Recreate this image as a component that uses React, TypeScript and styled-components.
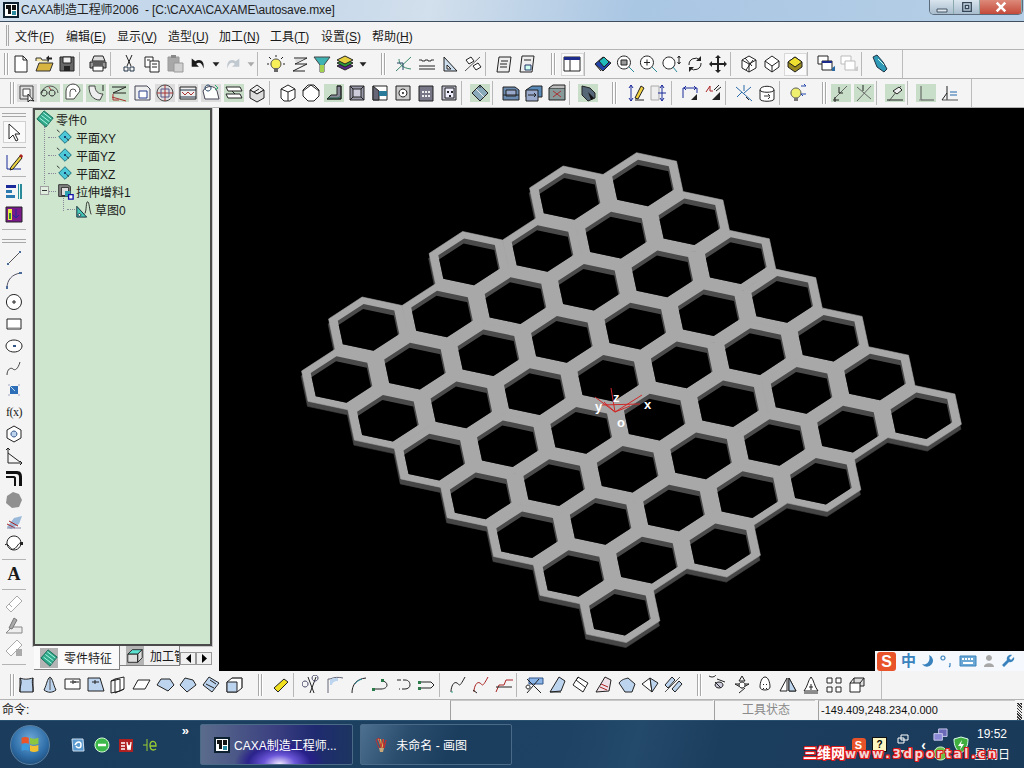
import React from 'react';
import styled, { createGlobalStyle } from 'styled-components';

const Global = createGlobalStyle`
  html, body { margin: 0; padding: 0; width: 1024px; height: 768px; overflow: hidden; background: #f4f4f4; }
  body { font-family: "Liberation Sans", "Noto Sans CJK SC", sans-serif; font-size: 12px; color: #1a1a1a; }
`;

type Shape = [string, string?, string?];
const K = '#222';
const GB: Shape = ['M0 1h20v18H0z', '#c9dec9'];
const GY: Shape = ['M0 1h20v18H0z', '#dcdcdc'];
const SK = '#bcd4ee';
const ICONS: Record<string, Shape[]> = {
  new: [['M4 2h8l4 4v12H4z', '#fff', K], ['M12 2v4h4', 'none', K]],
  open: [['M2 7V4h5l1 2h6v2', '#f2e6a0', '#333'], ['M2 17l3-8h14l-3 8z', '#d8b440', '#333'], ['M12 4l3-2.500v2h3v2h-3v2z', '#222']],
  save: [['M3 3h14v14H3z', '#666', K], ['M6 3h8v6H6z', '#eee', K], ['M7 12h6v5H7z', '#222']],
  print: [['M6 2h9l2 5H4z', '#ddd', K], ['M2 8h16v6H2z', '#999', K], ['M5 12h10v5H5z', '#fff', K], ['M5 10h10', 'none', '#222']],
  cut: [['M7 1l5 11M13 1L8 12', 'none', K], ['M5 13h4v4H5zM11 13h4v4h-4z', 'none', '#234']],
  copy: [['M3 3h8v10H3z', '#fff', K], ['M8 7h9v11H8z', '#fff', K], ['M10 10h5M10 13h5M5 6h3', 'none', K]],
  paste: [['M3 3h11v14H3z', '#a8a8a8', '#999'], ['M6 1h5v3H6z', '#888'], ['M9 9h9v9H9z', '#d0d0d0', '#999']],
  undo: [['M3 4v9h8l-3-3c3-3 7-1 8 5 2-8-4-12-9-8z', '#1a1a1a']],
  redo: [['M17 4v9H9l3-3c-3-3-7-1-8 5-2-8 4-12 9-8z', '#c0c8d0']],
  dd: [['M3 8h8l-4 5z', '#222']],
  ddg: [['M3 8h8l-4 5z', '#aaa']],
  sun: [['M10 5a5 5 0 1 1-.1 0z', '#f6ef5a', '#444'], ['M8 14h4v4H8z', '#666'], ['M10 1v2M3 3l2 2M17 3l-2 2M1 10h2M17 10h2', 'none', '#222']],
  zed: [['M5 4h13L6 10h12L4 17h12', 'none', K], ['M6 5l9 0-8 4z', '#ddd']],
  funnel: [['M2 3h16l-6 8v7H8v-7z', '#3fb3b3', '#444'], ['M8 11h4v7H8z', '#a4d050']],
  layers: [['M2 12l8-4 8 4-8 4z', '#5a2a8a', K], ['M2 9l8-4 8 4-8 4z', '#2f9a3a', K], ['M2 6l8-4 8 4-8 4z', '#e6d040', K]],
  note: [['M5 3h12l-2 15H3z', '#eee', K], ['M7 7h7M6 10h7M6 13h7', 'none', K]],
  note2: [['M5 2h12l-2 16H3z', '#eee', K], ['M7 6h7', 'none', K], ['M8 11h6v5H8z', '#cfe', '#236']],
  sk1: [['M2 17L17 3M5 5c0 5 3 9 12 10', 'none', '#3a8a6a'], ['M3 9h6v7', 'none', '#246']],
  sk2: [['M2 6h3v1h3V6h3v1h3V6h3', 'none', '#333'], ['M2 12h16M2 15h16', 'none', K]],
  sk3: [['M4 3v14h13z', '#cde', K], ['M7 11v4h4z', '#fff', K]],
  sk4: [['M2 17L17 3', 'none', '#555'], ['M3 6l5-3 3 4-5 3zM10 12l5-3 3 4-5 3z', '#fff', K]],
  win: [['M2 3h16v14H2z', '#fff', K], ['M2 3h16v3H2z', '#1d2c8a'], ['M8 6v11', 'none', K]],
  view1: [['M2 10l8-7 8 6-8 8z', '#24a', K], ['M6 7l5-4 5 5-5 5z', '#2bb', K], ['M2 10l6 7', 'none', K]],
  zoomw: [['M8 2a6.500 6.500 0 1 1-.1 0z', '#fff', K], ['M5 6h6v5H5z', '#999', K], ['M13 13l5 5', 'none', '#2a8a9a']],
  zoomi: [['M8 2a6.500 6.500 0 1 1-.1 0z', '#fff', K], ['M5 8.500h6M8 5.500v6', 'none', K], ['M13 13l5 5', 'none', '#2a8a9a']],
  zoomd: [['M7 3a6 6 0 1 1-.1 0z', '#fff', K], ['M17 2v8M15.500 4L17 2l1.500 2M15.500 8l1.500 2 1.500-2', 'none', K], ['M11 13l4 5', 'none', '#2a8a9a']],
  rotate: [['M4 11a6.500 6.500 0 0 1 11-5', 'none', K], ['M16 9a6.500 6.500 0 0 1-11 5', 'none', K], ['M16 2v5h-5zM4 18v-5h5z', K]],
  pan: [['M10 1l3 3h-2v5h5V7l3 3-3 3v-2h-5v5h2l-3 3-3-3h2v-5H4v2l-3-3 3-3v2h5V4H7z', K]],
  wire: [['M10 2l7 4v8l-7 4-7-4V6z', '#fff', K], ['M3 6l7 4 7-4M10 10v8M6 4l7 8M7 16l7-10', 'none', K]],
  wire2: [['M10 2l7 5v6l-7 5-7-5V7z', '#fff', K], ['M3 7l7 5 7-5M10 12v6', 'none', K]],
  shade: [['M10 3l7 5v5l-7 5-7-5V8z', '#9a8a20', K], ['M3 8l7-5 7 5-7 5z', '#f0e030', K]],
  win2: [['M2 2h10v8H2z', '#fff', K], ['M6 7h10v9H6z', '#fff', K], ['M6 7h10v2H6z', '#1d2c8a'], ['M16 14l3-2v5h-3z', '#2a6aa0']],
  win3: [['M2 2h10v8H2z', '#fff', '#bbb'], ['M6 7h10v9H6z', '#fff', '#bbb'], ['M16 14l3-2v5h-3z', '#ccc']],
  probe: [['M3 3l4-2 6 7 4 7-3 3-7-5z', '#2e9ab8', '#234'], ['M8 5l6 6', 'none', '#cfe']],
  a1: [GY, ['M3 3h13v13H3z', '#ddd', '#444'], ['M6 6h7v7H6z', '#fff', '#444'], ['M11 11l6 7-4-1-2 2z', '#fff', K]],
  a2: [GB, ['M2 10a8 7 0 0 1 16 0', 'none', '#555'], ['M4 13a3 3 0 1 1 .1 0zM12 13a3 3 0 1 1 .1 0z', 'none', K], ['M9 4l2 3', 'none', '#a33']],
  a3: [GB, ['M3 16V8a7 7 0 0 1 14 0l-6 8z', '#fff', '#444'], ['M7 14V9a3 3 0 0 1 6 0', 'none', '#555']],
  a4: [GB, ['M3 3c0 9 4 14 11 14l3-6c-5 0-8-3-8-8z', '#eee', '#444'], ['M17 2v6', 'none', K]],
  a5: [GB, ['M3 4h14L4 10h13', 'none', K], ['M3 14l14 4', 'none', '#a33'], ['M4 11v6h6', 'none', '#a33']],
  a6: [['M3 3h12l3 3v11H3z', '#eee', '#445'], ['M7 8h8v7H7z', '#fff', '#223a88']],
  a7: [GY, ['M10 2a8 8 0 1 1-.1 0z', '#ddd', '#444'], ['M10 2v16M2 10h16', 'none', '#a33'], ['M6 6h8v8H6z', 'none', '#558']],
  a8: [GY, ['M2 4h16v12H2z', '#eee', K], ['M4 9l3 3 3-3 3 3 3-3', 'none', '#a33'], ['M2 7h16M2 14h16', 'none', '#234']],
  a9: [GY, ['M2 8c3-6 12-6 14 0l2 8H4z', '#fff', '#445'], ['M7 8a3 3 0 1 1 .1 0z', 'none', '#246'], ['M14 2l3 3-3 2', 'none', '#2a6']],
  a10: [GB, ['M2 4h14l2 4H4zM2 11h14l2 4H4z', '#fff', K], ['M8 8l3 3', 'none', K]],
  a11: [['M3 7l7-5 7 5-7 4z', '#eee', K], ['M3 7v8l7 4 7-4V7l-7 4z', '#ddd', K], ['M7 9l5-3', 'none', K]],
  b1: [['M10 2l7 4v9l-5 3H6l-3-3V6z', '#fff', K], ['M3 6l7 3 7-3M10 9v9', 'none', K]],
  b2: [['M7 2h6l5 5v6l-5 5H7l-5-5V7z', '#fff', K], ['M2 8l8-6M10 2l8 6', 'none', K]],
  b3: [GB, ['M3 16l4-4h6V3h4v13z', '#889', K], ['M13 3l4 0v13H3', 'none', K], ['M4 15h10l3-2', 'none', '#264']],
  b4: [['M3 3h14v14H3z', '#99a', K], ['M6 6h8v8H6z', '#ccd', K], ['M3 3l3 3M17 3l-3 3M3 17l3-3M17 17l-3-3', 'none', K]],
  b5: [['M3 3h14v14H3z', '#fff', K], ['M3 3l6 5v9H3z', '#667', K], ['M9 8h8v5H9z', '#2a7a9a']],
  b6: [['M3 3h14v14H3z', '#ccc', K], ['M10 6a4 4 0 1 1-.1 0z', '#fff', K], ['M10 9a1 1 0 1 1-.1 0z', K]],
  b7: [['M3 3h14v15H3z', '#778', K], ['M6 8h2v2H6zM9 8h2v2H9zM12 8h2v2h-2zM6 12h2v2H6zM9 12h2v2H9zM12 12h2v2h-2z', '#eee']],
  b8: [['M3 3h14v14H3z', '#bbc', K], ['M6 5h9v10H6z', '#eef', K], ['M8 8h2v2H8zM12 8h2v2h-2zM10 12h2v2h-2z', K]],
  c1: [GB, ['M10 2l8 8-8 8-8-8z', '#8ab', K], ['M6 6l8 8', 'none', '#eee'], ['M10 2v3', 'none', K]],
  d1: [['M2 4h12l4 3v10H2z', '#6a8ab0', K], ['M5 7h10v6H5z', '#9ac', K], ['M2 12h16', 'none', K]],
  d2: [['M2 7l6-4h10v11H2z', '#5a8ab8', K], ['M2 7h12v11H2z', '#9ac', K], ['M4 12h8l-2-2M12 12l-2 2', 'none', K]],
  d3: [['M2 5h16v12H2z', '#899', K], ['M2 5l4-3h12v3', '#bbb', K], ['M6 8l8 6M14 8l-8 6', 'none', '#a33']],
  d4: [GB, ['M4 3l8 2 5 5v5l-7 3-6-6z', '#567', K], ['M10 9l6 6-3 2z', '#111']],
  e1: [['M5 2v16M3 15l2 3 2-3M3 5l2-3 2 3', 'none', '#1a2a9a'], ['M9 15l6-12 3 2-6 11z', '#f0d040', K], ['M9 17h9', 'none', K]],
  e2: [['M2 3h8v14H2z', '#eee', '#aaa'], ['M13 2v16M11 5l2-3 2 3M11 15l2 3 2-3M9 10h8', 'none', '#1a2a9a']],
  e3: [['M3 5h14M3 5v10M17 5v5', 'none', '#1a2a9a'], ['M11 17l6-6v6z', K], ['M6 3l-2 2 2 2M14 3l2 2-2 2', 'none', '#1a2a9a']],
  e4: [['M3 9l4-6v5h3', 'none', '#a22'], ['M9 17l8-8v8z', K], ['M11 7l5-5M13 8l5-4', 'none', K]],
  f1: [['M2 4l16 14M10 2v6M17 4l-7 6M3 14l5-5', 'none', '#2a6aaa'], ['M12 14l3 3', 'none', K]],
  f2: [['M3 7c0-5 14-5 14 0v9c0 3-14 3-14 0z', '#fff', K], ['M3 7c0 3 14 3 14 0', 'none', K], ['M7 13h6l-2-2M13 14l-2 2', 'none', '#333']],
  g1: [['M8 5a5 5 0 1 1-.1 0z', '#f0f070', '#555'], ['M6 15h4v3H6z', '#777'], ['M13 3h5M18 3l-2-2M13 11h5M13 11l2 2', 'none', '#24a']],
  h1: [GB, ['M3 16L16 3', 'none', '#666'], ['M8 4v6h4', 'none', K], ['M2 17h6M4 14v5', 'none', K]],
  h2: [GB, ['M3 18L17 3M3 4l14 12', 'none', '#666'], ['M9 2v6', 'none', K]],
  h3: [GB, ['M2 17h16', 'none', K], ['M4 18L16 3', 'none', '#555'], ['M8 8l6-4 3 3-5 4z', '#eee', K]],
  h4: [GB, ['M5 3v14h13', 'none', '#555'], ['M3 17h4', 'none', '#888']],
  h5: [['M8 3v14', 'none', K], ['M3 17h16', 'none', '#555'], ['M11 9h7M11 12h7', 'none', '#26a'], ['M8 10L3 17', 'none', K]],
  s1: [['M3 3c5 2 9 1 13 0v14H3z', SK, K], ['M3 3c3 5-1 9 0 14M16 3c-2 5 1 9 0 14', 'none', K]],
  s2: [['M10 2c3 2 3 7 6 13-4 3-8 3-12 0 3-6 3-11 6-13z', SK, K], ['M10 2v13', 'none', '#555']],
  s3: [['M2 4h15v10H2z', '#fff', K], ['M7 7h6M10 5v4M11 7h5', 'none', K]],
  s4: [['M2 3h12l4 13H2z', SK, K], ['M6 7h7M9 5v4', 'none', K]],
  s5: [['M6 4l9-2v12l-9 4z', '#fff', K], ['M2 6l9-2v12l-9 2z', 'none', K], ['M2 6l4-2M11 16l4-2', 'none', K]],
  s6: [['M6 5h12l-5 9H1z', '#fff', K]],
  s7: [['M6 4h9l4 6-6 6-11-6z', SK, K]],
  s8: [['M7 3l8 2 3 5-9 7-7-7z', SK, K]],
  s9: [['M8 2l10 6-7 9-9-7z', SK, K], ['M5 9l8 4M9 5l6 4', 'none', K]],
  s10: [['M3 7l5-4h10v10l-5 4H3z', '#fff', K], ['M3 7h10v10H3z', SK, K], ['M8 3h10v10', 'none', '#555']],
  t1: [['M3 13l10-9 4 3-10 10z', '#f0e020', K], ['M3 13l4 4', 'none', K]],
  t2: [['M6 2l6 16M14 2L8 18', 'none', K], ['M3 12a3 3 0 1 1 .1 0zM13 6a3 3 0 1 1 .1 0z', 'none', '#446']],
  t3: [['M3 18V4h2c4-2 9-2 13-1', 'none', '#667'], ['M5 5c2-2 5-2 8-2v3c-4 0-6 2-6 4H5z', SK]],
  t4: [['M4 18C4 10 8 4 18 3', 'none', K], ['M7 9c1-2 4-4 7-5', 'none', '#2a8a9a']],
  t5: [['M2 14h8c4 0 6-2 6-4s-2-4-5-4', 'none', K], ['M1 13h3v3H1zM10 4h3v3h-3z', '#2a7a4a']],
  t6: [['M9 5h2c4 0 5 3 5 5s-2 4-5 4H8', 'none', K], ['M3 5h4M5 14h1', 'none', K]],
  t7: [['M3 7h11l3 3-3 3H3', 'none', K], ['M1 6h3v3H1zM1 12h3v3H1z', '#2a7a4a']],
  u1: [['M3 17c0-6 3-11 6-9s2 5 8-6', 'none', K], ['M3 17h2', 'none', '#3a8']],
  u2: [['M3 17c0-6 3-11 6-9s2 5 8-6', 'none', '#a22'], ['M2 15l4 3', 'none', K]],
  u3: [['M2 17l3-7h5l2-5h7', 'none', '#a22'], ['M2 12h16', 'none', K]],
  w1: [['M4 3h14v6H4z', '#8ab4e6', '#358'], ['M2 4l14 14M14 4L2 18', 'none', K], ['M3 14a2 2 0 1 1 .1 0z', '#fff', K]],
  w2: [['M11 2l6 4-4 10-11 1z', SK, K], ['M2 17h11', 'none', K]],
  w3: [['M7 2l10 6-5 9-10-7z', '#fff', K], ['M5 5l9 7', 'none', K], ['M5 5l3-3', SK, K]],
  w4: [['M11 2l6 3-2 11-13 1z', '#f0e0e8', K], ['M7 9l7 3M6 12l7 3', 'none', '#a22']],
  w5: [['M2 8c3-4 6-4 9-5l7 6-3 8H8z', SK, K]],
  w6: [['M2 9l8-6 2 14z', '#fff', K], ['M10 3l8 5-6 9z', SK, K]],
  w7: [['M2 10l7-8 3 3-7 8zM9 14l7-8 3 3-7 8z', SK, K], ['M2 17L17 2', 'none', '#555']],
  x1: [['M3 2a4 3 0 1 1 .1 0z', '#fff', K], ['M10 13a4 3 0 1 1 .1 0z', '#ccd', K], ['M8 4l8 3M6 7l6 6', 'none', K]],
  x2: [['M10 1l3 5h-6zM3 9h14M3 9l7 4 7-4', '#eee', K], ['M10 13a3 3 0 1 1 .1 0z', '#fff', K], ['M7 18l6-5', 'none', K]],
  x3: [['M10 2c3 0 5 5 5 10 0 4-10 4-10 0 0-5 2-10 5-10z', '#fff', K], ['M8 9h1v1H8zM11 9h1v1h-1zM8 13h1v1H8zM11 13h1v1h-1z', K]],
  x4: [['M9 3v13H2zM11 3v13h7z', '#fff', K], ['M11 3v13h7z', SK, K]],
  x5: [['M10 2c3 3 3 9 7 14H3c4-5 4-11 7-14z', '#fff', K], ['M3 18h14M8 12h4M10 9v6', 'none', K]],
  x6: [['M3 3h5v5H3zM12 3h5v5h-5zM3 12h5v5H3zM12 12h5v5h-5z', '#fff', K]],
  x7: [['M7 3h10v8H7z', '#ddd', K], ['M3 8h10v9H3z', '#fff', K], ['M7 3L3 8M17 3l-4 5', 'none', K]],
  arrow: [['M5 2v15l4-4 3 6 2-1-3-6h5z', '#fff', K]],
  pencil: [['M3 3v14h14', 'none', '#1a2a9a'], ['M7 15l9-11 2 2-9 11-3 1z', '#e8d040', K], ['M15 4l2-2 2 2-1 2z', '#a22']],
  tb1: [['M2 4h10v3H2z', '#1a2a9a'], ['M2 9h6v3H2zM2 14h9v3H2z', '#2a7ab0'], ['M14 3h4v15h-4z', '#2a8a9a'], ['M15 3h1v15h-1z', '#dfe']],
  tb2: [['M2 3h16v15H2z', '#7a1a8a', K], ['M4 5h4v11H4z', '#ecec40'], ['M12 5v8M9 11l3 3 3-3', 'none', '#1a2a9a'], ['M5 9h2v6H5z', '#2a8a3a']],
  line: [['M4 16L16 4', 'none', '#555'], ['M3 15h2v2H3zM15 3h2v2h-2z', '#4a6a9a']],
  arc: [['M3 18C3 10 8 4 17 3', 'none', '#556'], ['M2 16h2v3H2zM15 2h3v2h-3z', '#4a6a9a']],
  circle: [['M10 2.500a7.500 7.500 0 1 1-.1 0z', '#fff', K], ['M8 10h4M10 8v4', 'none', K]],
  rect: [['M3 5h14v10H3z', '#fff', K], ['M4 14h12', 'none', '#888']],
  ell: [['M10 4c5 0 8 3 8 6s-3 6-8 6-8-3-8-6 3-6 8-6z', '#fff', K], ['M9 9h3v2H9z', '#358']],
  spline: [['M3 17c0-6 4-8 6-6s5 0 7-7', 'none', '#444']],
  sq: [['M6 6h8v8H6z', '#2e6eb8'], ['M6 6l5 5', 'none', '#bde'], ['M4 4h2v2H4zM14 4h2v2h-2zM4 14h2v2H4zM14 14h2v2h-2z', '#ccd']],
  hex: [['M10 2l7 4v8l-7 4-7-4V6z', '#fff', K], ['M10 7a3 3 0 1 1-.1 0z', SK, '#358']],
  ang: [['M4 2v15h14', 'none', K], ['M4 7l12 9', 'none', K], ['M2 4l2-2 2 2M16 15l2 2-2 2', 'none', K]],
  fil: [['M2 3h11c4 0 5 3 5 6v9h-3V9c0-2-1-3-3-3H2zM2 8h8c1 0 2 1 2 2v8h-2v-7c0-1 0-1-1-1H2z', '#111']],
  blob: [['M9 2l6 2 3 6-3 7-7 1-6-5 1-7z', '#909090']],
  wave: [['M3 15l7-9 8-2-3 8-8 5z', '#9ab8d8'], ['M3 12l8 4M5 9l9 5', 'none', '#a22'], ['M3 16h14', 'none', '#88a']],
  curve: [['M10 2a7 7 0 1 1-.1 0z', '#fff', K], ['M1 11c3-4 5 6 9 4s4-7 8-6', 'none', K], ['M16 8h3v3h-3z', K]],
  p1: [['M2 13L13 2l5 5L7 18z', '#fff', '#aaa'], ['M5 10l3 3', 'none', '#aaa']],
  p2: [['M2 17h16v-6H8z', '#eee', '#888'], ['M5 12l5-10 3 2-5 9z', '#aaa', '#777']],
  p3: [['M2 13L13 2l5 5L7 18z', '#fff', '#aaa'], ['M12 11h6v7h-6z', '#aaa']],
};

const Svg = styled.svg<{ $s?: number }>`
  display: block;
  width: ${p => p.$s ?? 20}px;
  height: ${p => p.$s ?? 20}px;
  flex: none;
`;
const Icon = ({ name, size }: { name: string; size?: number }) => (
  <Svg $s={size} viewBox={name === 'dd' || name === 'ddg' ? '0 0 14 20' : '0 0 20 20'}>
    {ICONS[name].map(([d, f, s], i) => (
      <path key={i} d={d} fill={f ?? 'none'} stroke={s ?? 'none'} strokeWidth={1} />
    ))}
  </Svg>
);

const Bar = styled.div<{ $h: number }>`
  height: ${p => p.$h}px;
  display: flex;
  align-items: center;
  box-sizing: border-box;
  background: #f4f4f4;
  border-bottom: 1px solid #b4b4b4;
`;
const Tool = styled.div<{ $on?: boolean }>`
  width: 23px;
  height: 23px;
  flex: none;
  display: flex;
  align-items: center;
  justify-content: center;
  box-sizing: border-box;
  ${p => p.$on && `background:#fafafa;border:1px solid #d8d8d8;`}
`;
const Drop = styled.div`
  width: 12px;
  flex: none;
  display: flex;
  justify-content: center;
  svg { width: 12px; height: 18px; }
`;
const Sep = styled.div`
  width: 8px;
  height: 24px;
  flex: none;
  position: relative;
  &::after { content: ''; position: absolute; left: 0; top: 0; bottom: 0; width: 1px; background: #b8b8b8; }
`;
const Grip = styled.div<{ $w: number }>`
  width: ${p => p.$w}px;
  height: 100%;
  flex: none;
  display: flex;
  justify-content: flex-end;
  align-items: center;
  box-sizing: border-box;
  padding-right: ${p => Math.max(p.$w - 16, 2)}px;
  gap: 2px;
  i { display: block; width: 1px; height: 22px; background: #a8a8a8; box-shadow: 1px 0 0 #fff; }
`;
const End = styled.div<{ $m: number }>`
  margin-left: ${p => p.$m}px;
  width: 1px;
  height: 100%;
  background: #bcbcbc;
`;

const Strip = ({ items, start }: { items: string[]; start: number }) => (
  <>
    <Grip $w={start}><i /><i /></Grip>
    {items.map((it, i) => {
      if (it === '|') return <Sep key={i} />;
      if (it.startsWith('#')) return <Grip key={i} $w={Number(it.slice(1))}><i /><i /></Grip>;
      if (it.startsWith('>')) return <End key={i} $m={Number(it.slice(1))} />;
      if (it === 'dd' || it === 'ddg') return <Drop key={i}><Icon name={it} /></Drop>;
      const on = it.startsWith('*');
      const n = on ? it.slice(1) : it;
      return <Tool key={i} $on={on}><Icon name={n} size={n === 'undo' || n === 'redo' ? 18 : 20} /></Tool>;
    })}
  </>
);

const ROW1 = ['new', 'open', 'save', '|', 'print', '|', 'cut', 'copy', 'paste', 'undo', 'dd', 'redo', 'ddg', '|', 'sun', 'zed', 'funnel', 'layers', 'dd', '#24', 'sk1', 'sk2', 'sk3', 'sk4', '|', 'note', 'note2', '#22', '*win', '|', 'view1', 'zoomw', 'zoomi', 'zoomd', 'rotate', 'pan', '|', 'wire', 'wire2', '*shade', '|', 'win2', 'win3', '|', 'probe', '>10'];
const ROW2 = ['a1', 'a2', 'a3', 'a4', 'a5', 'a6', 'a7', 'a8', 'a9', 'a10', 'a11', '|', 'b1', 'b2', 'b3', 'b4', 'b5', 'b6', 'b7', 'b8', '|', 'c1', '|', 'd1', 'd2', 'd3', '|', 'd4', '#25', 'e1', 'e2', '|', 'e3', 'e4', '|', 'f1', 'f2', '|', 'g1', '#20', 'h1', 'h2', '|', 'h3', '|', 'h4', 'h5', '>10'];
const ROW3 = ['s1', 's2', 's3', 's4', 's5', 's6', 's7', 's8', 's9', 's10', '#24', 't1', '|', 't2', 't3', 't4', 't5', 't6', 't7', '|', 'u1', 'u2', 'u3', '|', 'w1', 'w2', 'w3', 'w4', 'w5', 'w6', 'w7', '#23', 'x1', 'x2', 'x3', 'x4', 'x5', 'x6', 'x7', '>12'];

const Shell = styled.div`
  width: 1024px;
  height: 768px;
  display: flex;
  flex-direction: column;
  overflow: hidden;
`;
const TitleBar = styled.div`
  height: 22px;
  box-sizing: border-box;
  display: flex;
  align-items: flex-start;
  border-bottom: 1px solid #3f4f60;
  background: linear-gradient(100deg, #cfdfee 0%, #bfd4e9 22%, #d2dfec 42%, #a9c6e3 62%, #b6cfe6 100%);
`;
const TitleIcon = styled.svg`
  width: 16px;
  height: 16px;
  margin: 2px 2px 0 3px;
  flex: none;
`;
const TitleText = styled.span`
  font-size: 12px;
  line-height: 20px;
  letter-spacing: -0.14px;
  white-space: pre;
  color: #222;
`;
const WinBtns = styled.div`
  margin-left: auto;
  margin-right: 1px;
  display: flex;
  height: 14px;
  border: 1px solid #5b6b7b;
  border-top: 0;
  border-radius: 0 0 5px 5px;
  overflow: hidden;
`;
const WinBtn = styled.div<{ $w: number; $red?: boolean }>`
  width: ${p => p.$w}px;
  box-sizing: border-box;
  display: flex;
  align-items: center;
  justify-content: center;
  border-right: 1px solid #8aa;
  background: ${p => p.$red ? 'linear-gradient(#dd8a7a,#c44a3a)' : 'linear-gradient(#d8e4ee,#a8bccc)'};
`;
const MenuBar = styled(Bar)`
  gap: 0;
  padding-left: 15px;
  position: relative;
  &::before { content: ''; position: absolute; left: 6px; top: 3px; bottom: 3px; width: 1px; background: #a8a8a8; box-shadow: 2px 0 0 #a8a8a8; }
`;
const MenuItem = styled.span`
  width: 51px;
  flex: none;
  font-size: 12px;
  white-space: nowrap;
  u { text-underline-offset: 1px; }
`;
const Main = styled.div`
  height: 563px;
  display: flex;
  background: #f4f4f4;
`;
const LeftBar = styled.div`
  width: 28px;
  flex: none;
  display: flex;
  flex-direction: column;
  align-items: center;
  margin-right: 5px;
`;
const VTool = styled.div<{ $on?: boolean; $h?: number }>`
  width: 23px;
  height: ${p => p.$h ?? 22}px;
  box-sizing: border-box;
  display: flex;
  align-items: center;
  justify-content: center;
  flex: none;
  ${p => p.$on && 'background:#fafafa;border:1px solid #d0d0d0;'}
`;
const VSep = styled.div<{ $h: number }>`
  height: ${p => p.$h}px;
  width: 24px;
  flex: none;
  display: flex;
  align-items: center;
  &::after { content: ''; width: 100%; height: 1px; background: #b4b4b4; }
`;
const VGrip = styled.div<{ $h: number }>`
  height: ${p => p.$h}px;
  width: 24px;
  flex: none;
  display: flex;
  flex-direction: column;
  justify-content: center;
  gap: 2px;
  i { display: block; height: 1px; background: #a8a8a8; }
`;
const FxText = styled.span`
  font-family: "Liberation Serif", serif;
  font-size: 12px;
  letter-spacing: -0.5px;
`;
const BigA = styled.span`
  font-family: "Liberation Serif", serif;
  font-weight: 700;
  font-size: 18px;
`;
const Panel = styled.div`
  width: 179px;
  flex: none;
  margin-right: 7px;
  display: flex;
  flex-direction: column;
`;
const TreeBox = styled.div`
  flex: 1;
  box-sizing: border-box;
  background: #cde6cd;
  border: 2px solid #4a4a4a;
  outline: 1px solid #c8c8c8;
  position: relative;
`;
const TreeRow = styled.div<{ $i: number }>`
  height: 18px;
  display: flex;
  align-items: center;
  gap: 1px;
  padding-left: ${p => p.$i}px;
  position: relative;
  font-size: 12px;
  white-space: nowrap;
  &::before {
    content: '';
    position: absolute;
    left: ${p => p.$i - 8}px;
    top: 9px;
    width: ${p => (p.$i > 12 ? 8 : 0)}px;
    border-top: 1px dotted #889;
  }
`;
const TreeLabel = styled.span`
  margin-left: 1px;
`;
const VLine = styled.div<{ $x: number; $t: number; $h: number }>`
  position: absolute;
  left: ${p => p.$x}px;
  top: ${p => p.$t}px;
  height: ${p => p.$h}px;
  border-left: 1px dotted #889;
`;
const Minus = styled.div`
  position: absolute;
  left: 5px;
  top: 76px;
  width: 7px;
  height: 7px;
  border: 1px solid #a0a0a0;
  background: #dfeedf;
  &::after { content: ''; position: absolute; left: 1px; right: 1px; top: 3px; height: 1px; background: #333; }
`;
const Tabs = styled.div`
  height: 25px;
  flex: none;
  display: flex;
  align-items: flex-start;
  position: relative;
`;
const Tab = styled.div<{ $on?: boolean; $w: number }>`
  width: ${p => p.$w}px;
  height: ${p => (p.$on ? 24 : 20)}px;
  box-sizing: border-box;
  margin-left: ${p => (p.$on ? 1 : 0)}px;
  display: flex;
  align-items: center;
  gap: 6px;
  padding-left: 6px;
  background: ${p => (p.$on ? '#fafafa' : '#f0f0f0')};
  border-bottom: 1px solid #808080;
  border-right: 1px solid #808080;
  overflow: hidden;
  white-space: nowrap;
  font-size: 12px;
  flex: none;
`;
const TabIcon = styled.div`
  background: #b4b4b4;
  width: 18px;
  height: 20px;
  flex: none;
  display: flex;
  align-items: center;
  justify-content: center;
`;
const TabScroll = styled.div`
  position: absolute;
  right: 0;
  top: 6px;
  display: flex;
`;
const TabArrow = styled.div`
  width: 16px;
  height: 13px;
  box-sizing: border-box;
  background: #f0f0f0;
  border: 1px solid #999;
  display: flex;
  align-items: center;
  justify-content: center;
`;
const Canvas = styled.div`
  flex: 1;
  background: #000;
  position: relative;
  overflow: hidden;
`;
const Scene = styled.svg`
  display: block;
  width: 100%;
  height: 100%;
`;
const Ime = styled.div`
  position: absolute;
  right: 0;
  bottom: 0;
  height: 20px;
  width: 149px;
  background: #f5f9fd;
  display: flex;
  align-items: center;
  gap: 5px;
  padding-left: 2px;
  box-sizing: border-box;
`;
const ImeS = styled.div<{ $s: number }>`
  width: ${p => p.$s}px;
  height: ${p => p.$s}px;
  border-radius: 3px;
  background: #e8532a;
  color: #fff;
  font-weight: 700;
  font-size: ${p => p.$s - 3}px;
  line-height: ${p => p.$s}px;
  text-align: center;
  flex: none;
`;
const ImeCn = styled.span`
  color: #3a82bd;
  font-size: 15px;
  font-weight: 700;
  line-height: 18px;
`;
const StatusBar = styled.div`
  height: 20px;
  flex: none;
  display: flex;
  background: #f4f4f4;
  font-size: 12px;
  align-items: stretch;
`;
const Cmd = styled.div`
  width: 450px;
  flex: none;
  padding-left: 2px;
  box-sizing: border-box;
  line-height: 20px;
`;
const Field = styled.div<{ $w: number; $gray?: boolean }>`
  width: ${p => p.$w}px;
  flex: none;
  box-sizing: border-box;
  border-left: 1px solid #a0a0a0;
  border-top: 1px solid #c8c8c8;
  margin-right: ${p => (p.$gray ? 3 : 1)}px;
  line-height: 19px;
  padding-left: 2px;
  color: ${p => (p.$gray ? '#8a8a8a' : '#111')};
  font-size: ${p => (p.$gray ? 12 : 11)}px;
  text-align: ${p => (p.$gray ? 'center' : 'left')};
  white-space: nowrap;
`;
const Resize = styled.div`
  width: 5px;
  margin: 3px 0 0 1px;
  background: repeating-linear-gradient(45deg, #333 0 1px, #eee 1px 2px);
`;
const Taskbar = styled.div`
  height: 48px;
  flex: none;
  display: flex;
  align-items: center;
  position: relative;
  background: linear-gradient(105deg, #1b3c5c 0%, #1d4263 55%, #23496b 62%, #1c3e5e 70%, #1a3a5a 100%);
  border-top: 1px solid #2a506f;
  box-sizing: border-box;
`;
const Orb = styled.div`
  width: 38px;
  height: 38px;
  margin-left: 10px;
  border-radius: 50%;
  flex: none;
  background: radial-gradient(circle at 50% 35%, #6fa8d8 0%, #2f6ea8 55%, #153a60 100%);
  border: 1px solid #5a7f9f;
  display: flex;
  align-items: center;
  justify-content: center;
`;
const Quick = styled.div`
  display: flex;
  gap: 8px;
  margin-left: 20px;
  width: 127px;
  flex: none;
  position: relative;
`;
const More = styled.span`
  position: absolute;
  right: 9px;
  top: -14px;
  color: #fff;
  font-size: 13px;
  font-weight: 700;
  letter-spacing: -1px;
`;
const TaskBtn = styled.div<{ $on?: boolean; $w: number; $m: number }>`
  width: ${p => p.$w}px;
  height: 41px;
  margin-left: ${p => p.$m}px;
  flex: none;
  box-sizing: border-box;
  display: flex;
  align-items: center;
  gap: 4px;
  color: #fff;
  font-size: 12px;
  white-space: nowrap;
  border: 1px solid #4a6a88;
  border-radius: 2px;
  padding-left: ${p => (p.$on ? 13 : 12)}px;
  background: ${p => p.$on
    ? 'radial-gradient(ellipse 45px 26px at 52% 100%, #efe8ff 0%, #6a55d8 35%, rgba(40,30,140,.9) 70%, transparent 100%), linear-gradient(90deg, #5a6c8c 0%, #3a3f80 50%, #1f2a70 75%, #1c3560 100%)'
    : 'linear-gradient(115deg, #4d7090 0%, #2a4c6d 30%, #1c3e5e 60%)'};
`;
const Tray = styled.div`
  margin-left: auto;
  display: flex;
  align-items: center;
  padding-right: 12px;
  color: #fff;
`;
const TrayCell = styled.div<{ $w: number }>`
  width: ${p => p.$w}px;
  flex: none;
  display: flex;
  flex-direction: column;
  align-items: center;
  gap: 3px;
`;
const Clock = styled.div`
  width: 40px;
  font-size: 12px;
  line-height: 21px;
  text-align: center;
`;
const Help = styled.div`
  width: 13px;
  height: 13px;
  background: #fdf6c0;
  color: #000;
  font-weight: 700;
  font-size: 10px;
  line-height: 13px;
  text-align: center;
  border: 1px solid #111;
`;
const Mini = styled.span`
  color: #fff;
  font-size: 14px;
  font-weight: 700;
  line-height: 14px;
`;
const Mark = styled.div`
  position: absolute;
  left: 803px;
  bottom: 6px;
  font-family: "DejaVu Sans", "Noto Sans CJK SC", sans-serif;
  font-weight: 700;
  font-size: 14px;
  line-height: 15px;
  color: #fff;
  white-space: nowrap;
  text-shadow: 1px 0 0 #e01818, -1px 0 0 #e01818, 0 1px 0 #e01818, 0 -1px 0 #e01818, 1px 1px 0 #e01818, -1px -1px 0 #e01818, 1px -1px 0 #e01818, -1px 1px 0 #e01818;
`;
const MarkUrl = styled.span`
  font-size: 12px;
  letter-spacing: 2.6px;
  color: #f0d8d8;
`;

/* honeycomb geometry, in window coordinates */
const U = [46.4, 38.8];
const TT = [-100.5, 65.5];
const V = [(TT[0] - U[0]) / 2, (TT[1] - U[1]) / 2];
const C0 = [643, 183];
const verts = [
  [(2 * U[0] + V[0]) / 3, (2 * U[1] + V[1]) / 3],
  [(U[0] + 2 * V[0]) / 3, (U[1] + 2 * V[1]) / 3],
  [(V[0] - U[0]) / 3, (V[1] - U[1]) / 3],
  [-(2 * U[0] + V[0]) / 3, -(2 * U[1] + V[1]) / 3],
  [-(U[0] + 2 * V[0]) / 3, -(U[1] + 2 * V[1]) / 3],
  [(U[0] - V[0]) / 3, (U[1] - V[1]) / 3],
];
const centers: number[][] = [];
for (let r = 0; r < 7; r++) {
  const k = Math.floor(r / 2);
  const odd = r % 2 === 1;
  for (let i = 0; i < 7; i++) {
    centers.push([
      C0[0] + (odd ? V[0] : 0) + k * TT[0] + i * U[0],
      C0[1] + (odd ? V[1] : 0) + k * TT[1] + i * U[1],
    ]);
  }
}
const hexPath = (s: number, dx = 0, dy = 0) =>
  centers.map(c => 'M' + verts.map(v => `${(c[0] + v[0] * s + dx).toFixed(1)} ${(c[1] + v[1] * s + dy).toFixed(1)}`).join('L') + 'Z').join('');

const HOLE = 0.77;
const Honeycomb = () => (
  <Scene viewBox="219 108 805 563">
    <defs>
      <clipPath id="holes"><path d={hexPath(HOLE)} /></clipPath>
    </defs>
    <path d={hexPath(1, -0.5, 5)} fill="#464646" stroke="#464646" strokeWidth={0.6} />
    <path d={hexPath(1)} fill="#a8a8a8" stroke="#a8a8a8" strokeWidth={0.6} />
    <path d={hexPath(HOLE)} fill="#4a4a4a" />
    <g clipPath="url(#holes)"><path d={hexPath(HOLE, -0.5, 5)} fill="#000" /></g>
    <path d="M615 412L642 395M615 412L595 397M615 412L611 388M600 405L640 404M604 402L615 412L630 406" fill="none" stroke="#d02828" strokeWidth={1} />
    <g fill="#fff" fontFamily="'Liberation Sans', sans-serif" fontSize={13} fontWeight={700}>
      <text x={595} y={411}>y</text>
      <text x={613} y={402}>z</text>
      <text x={617} y={427}>o</text>
      <text x={644} y={409}>x</text>
    </g>
  </Scene>
);

const MENUS: [string, string][] = [['文件', 'F'], ['编辑', 'E'], ['显示', 'V'], ['造型', 'U'], ['加工', 'N'], ['工具', 'T'], ['设置', 'S'], ['帮助', 'H']];
const LEFT1 = ['line', 'arc', 'circle', 'rect', 'ell', 'spline', 'sq'];
const LEFT2 = ['hex', 'ang', 'fil', 'blob', 'wave', 'curve'];

const Book = ({ s = 18 }: { s?: number }) => (
  <Svg $s={s} viewBox="0 0 20 20">
    <path d="M9 1l10 8-8 10L1 10z" fill="#2fa98a" stroke="#165" />
    <path d="M6 6l9 7M4 9l9 7M8 3l9 7" stroke="#bfe" fill="none" />
  </Svg>
);
const Plane = () => (
  <Svg $s={18} viewBox="0 0 20 20">
    <path d="M10 3l7 7-7 7-7-7z" fill="#4cc8d8" stroke="#167" />
    <path d="M1 2l18 16" stroke="#222" fill="none" strokeDasharray="4 10" />
    <path d="M9 9h2v2H9z" fill="#136" />
  </Svg>
);
const Extrude = () => (
  <Svg $s={18} viewBox="0 0 20 20">
    <path d="M3 3h10l3 2v11H3z" fill="#888" stroke="#222" />
    <path d="M6 6h8v9H6z" fill="#ddd" stroke="#222" />
    <path d="M10 10h6v6h-6z" fill="#2aa0b0" />
    <path d="M14 14h5v5h-5z" fill="#fff" stroke="#11a" strokeWidth={1.5} />
  </Svg>
);
const Sketch = () => (
  <Svg $s={18} viewBox="0 0 20 20">
    <path d="M2 7l11 12H2z" fill="#45c8b8" stroke="#123" />
    <path d="M5 15a1.500 1.500 0 1 1-.1 0z" fill="#fff" stroke="#123" />
    <path d="M11 15c2-4 1-13 3-13s2 10 4 14" fill="none" stroke="#222" />
  </Svg>
);
const TabTool = () => (
  <Svg $s={18} viewBox="0 0 20 20">
    <path d="M2 8l5-5h11l-5 5z" fill="#5ce0d0" stroke="#222" />
    <path d="M2 8h11v9H2zM13 8l5-5v9l-5 5z" fill="#ddd" stroke="#222" />
  </Svg>
);
const AppGlyph = () => (
  <>
    <path d="M0 0h16v16H0z" fill="#0d2030" />
    <path d="M2 2h12v12H2z" fill="#fff" />
    <path d="M3 3h5v9H5V7H3z" fill="#111" />
    <path d="M9 3h4v5H9z" fill="#111" />
    <path d="M9 9h4v4H9z" fill="#2a8aa0" />
  </>
);

export default function App() {
  return (
    <Shell>
      <Global />
      <TitleBar>
        <TitleIcon viewBox="0 0 16 16"><AppGlyph /></TitleIcon>
        <TitleText>CAXA制造工程师2006  - [C:\CAXA\CAXAME\autosave.mxe]</TitleText>
        <WinBtns>
          <WinBtn $w={24}>
            <Svg $s={14} viewBox="0 0 14 14"><path d="M2 9h10v3H2z" fill="#dfe8ef" stroke="#456" /></Svg>
          </WinBtn>
          <WinBtn $w={26}>
            <Svg $s={12} viewBox="0 0 14 14"><path d="M2 2h10v10H2zM5 5h4v4H5z" fill="none" stroke="#345" strokeWidth={1.5} /></Svg>
          </WinBtn>
          <WinBtn $w={42} $red>
            <Svg $s={12} viewBox="0 0 14 14"><path d="M2 2l10 10M12 2L2 12" fill="none" stroke="#fff" strokeWidth={3} /></Svg>
          </WinBtn>
        </WinBtns>
      </TitleBar>
      <MenuBar $h={28}>
        {MENUS.map(([t, k]) => <MenuItem key={k}>{t}(<u>{k}</u>)</MenuItem>)}
      </MenuBar>
      <Bar $h={29}><Strip start={9.5} items={ROW1} /></Bar>
      <Bar $h={29}><Strip start={15.5} items={ROW2} /></Bar>
      <Main>
        <LeftBar>
          <VGrip $h={13}><i /><i /></VGrip>
          <VTool $on><Icon name="arrow" /></VTool>
          <VSep $h={8} />
          <VTool><Icon name="pencil" /></VTool>
          <VSep $h={7} />
          <VTool><Icon name="tb1" /></VTool>
          <VTool $h={23}><Icon name="tb2" /></VTool>
          <VSep $h={9} />
          <VGrip $h={13}><i /><i /></VGrip>
          {LEFT1.map(n => <VTool key={n}><Icon name={n} /></VTool>)}
          <VTool><FxText>f(x)</FxText></VTool>
          {LEFT2.map(n => <VTool key={n}><Icon name={n} /></VTool>)}
          <VSep $h={8} />
          <VTool><BigA>A</BigA></VTool>
          <VSep $h={8} />
          <VTool><Icon name="p1" /></VTool>
          <VTool><Icon name="p2" /></VTool>
          <VTool><Icon name="p3" /></VTool>
          <VSep $h={10} />
        </LeftBar>
        <Panel>
          <TreeBox>
            <VLine $x={9} $t={16} $h={58} />
            <VLine $x={28} $t={88} $h={13} />
            <TreeRow $i={1}><Book /><TreeLabel>零件0</TreeLabel></TreeRow>
            <TreeRow $i={21}><Plane /><TreeLabel>平面XY</TreeLabel></TreeRow>
            <TreeRow $i={21}><Plane /><TreeLabel>平面YZ</TreeLabel></TreeRow>
            <TreeRow $i={21}><Plane /><TreeLabel>平面XZ</TreeLabel></TreeRow>
            <TreeRow $i={21}><Extrude /><TreeLabel>拉伸增料1</TreeLabel></TreeRow>
            <TreeRow $i={40}><Sketch /><TreeLabel>草图0</TreeLabel></TreeRow>
            <Minus />
          </TreeBox>
          <Tabs>
            <Tab $on $w={86}><TabIcon><Book /></TabIcon>零件特征</Tab>
            <Tab $w={60}><TabIcon><TabTool /></TabIcon>加工管理</Tab>
            <TabScroll>
              <TabArrow><Svg $s={9} viewBox="0 0 9 9"><path d="M7 0v9L2 4.500z" fill="#000" /></Svg></TabArrow>
              <TabArrow><Svg $s={9} viewBox="0 0 9 9"><path d="M2 0v9l5-4.500z" fill="#000" /></Svg></TabArrow>
            </TabScroll>
          </Tabs>
        </Panel>
        <Canvas>
          <Honeycomb />
          <Ime>
            <ImeS $s={19}>S</ImeS>
            <ImeCn>中</ImeCn>
            <Svg $s={14} viewBox="0 0 14 14"><path d="M8 1a6 6 0 1 1-7 9c5 2 9-3 7-9z" fill="#3a82bd" /></Svg>
            <Svg $s={14} viewBox="0 0 14 14"><path d="M3 2a2 2 0 1 1-.1 0zM10 9v3l-1 1" fill="none" stroke="#3a82bd" strokeWidth={1.2} /></Svg>
            <Svg $s={18} viewBox="0 0 18 14"><path d="M1 2h16v10H1z" fill="#6aa7d4" stroke="#3a82bd" /><path d="M3 4h2v2H3zM6 4h2v2H6zM9 4h2v2H9zM12 4h2v2h-2zM4 8h10v2H4z" fill="#fff" /></Svg>
            <Svg $s={14} viewBox="0 0 14 14"><path d="M7 1a3 3 0 1 1-.1 0zM2 13c0-5 10-5 10 0z" fill="#a8a8a8" /></Svg>
            <Svg $s={14} viewBox="0 0 14 14"><path d="M13 3l-3 3-2-2 3-3C8 0 5 3 6 6l-5 5 2 2 5-5c3 1 6-2 5-5z" fill="#3a82bd" /></Svg>
          </Ime>
        </Canvas>
      </Main>
      <Bar $h={29}><Strip start={15.5} items={ROW3} /></Bar>
      <StatusBar>
        <Cmd>命令:</Cmd>
        <Field $w={263} />
        <Field $w={101} $gray>工具状态</Field>
        <Field $w={197}>-149.409,248.234,0.000</Field>
        <Resize />
      </StatusBar>
      <Taskbar>
        <Orb>
          <Svg $s={24} viewBox="0 0 20 20">
            <path d="M3 4c2-1 4-1 6 0v5c-2-1-4-1-6 0z" fill="#e8552a" />
            <path d="M10 4c2 1 4 1 7 0v5c-3 1-5 1-7 0z" fill="#8ac640" />
            <path d="M3 10c2-1 4-1 6 0v5c-2-1-4-1-6 0z" fill="#3a9ade" />
            <path d="M10 10c2 1 4 1 7 0v5c-3 1-5 1-7 0z" fill="#f0c030" />
          </Svg>
        </Orb>
        <Quick>
          <Svg $s={16} viewBox="0 0 16 16"><path d="M2 2h11l1 12H3z" fill="#5a9ad0" stroke="#cde" /><path d="M5 8c2-4 6-4 6 0s-4 3-5 1" fill="none" stroke="#fff" strokeWidth={1.5} /></Svg>
          <Svg $s={16} viewBox="0 0 16 16"><path d="M8 1a7 7 0 1 1-.1 0z" fill="#3cb84a" stroke="#dfd" /><path d="M4 8h8" stroke="#fff" strokeWidth={2.500} /></Svg>
          <Svg $s={16} viewBox="0 0 16 16"><path d="M1 2h14v13H1z" fill="#b02020" /><path d="M3 6h4M3 9h4M3 12h4M9 5l1 8 1-5 1 5 1-8" fill="none" stroke="#fff" strokeWidth={1.3} /></Svg>
          <Svg $s={16} viewBox="0 0 16 16"><path d="M1 8h4M5 2v12" stroke="#9acd32" fill="none" /><path d="M8 9h6c0-6-6-6-6-1s3 6 6 4" fill="none" stroke="#9acd32" strokeWidth={1.3} /></Svg>
          <More>»</More>
        </Quick>
        <TaskBtn $on $w={153} $m={3}>
          <Svg $s={16} viewBox="0 0 16 16"><AppGlyph /></Svg>
          CAXA制造工程师...
        </TaskBtn>
        <TaskBtn $w={152} $m={7}>
          <Svg $s={16} viewBox="0 0 16 16">
            <path d="M5 2l3 9h2l1-9-1 0-1 5-1-5z" fill="#e0b050" />
            <path d="M3 3l3 8h5l2-8-2 8-1-9-2 8-2-9z" fill="none" stroke="#c03030" />
            <path d="M6 11h5l-1 4H7z" fill="#c8a878" />
          </Svg>
          &nbsp;未命名 - 画图
        </TaskBtn>
        <Tray>
          <TrayCell $w={21}><ImeS $s={14}>S</ImeS></TrayCell>
          <TrayCell $w={21}><Help>?</Help></TrayCell>
          <TrayCell $w={25}>
            <Svg $s={12} viewBox="0 0 12 12"><path d="M4 2h7v5H4zM1 5h6v5H1z" fill="none" stroke="#fff" /></Svg>
            <Svg $s={8} viewBox="0 0 8 8"><path d="M1 2h6L4 6z" fill="#ddd" /></Svg>
          </TrayCell>
          <TrayCell $w={17}><Mini>‹</Mini></TrayCell>
          <TrayCell $w={17}>
            <Svg $s={15} viewBox="0 0 16 16"><path d="M6 1h9v8H6z" fill="#6a6ab8" stroke="#cce" /><path d="M1 6h9v7H1z" fill="#8a8ad8" stroke="#cce" /></Svg>
            <Svg $s={15} viewBox="0 0 16 16"><path d="M8 1a7 7 0 1 1-.1 0z" fill="#6cc04a" stroke="#dfd" /></Svg>
          </TrayCell>
          <TrayCell $w={23}>
            <Svg $s={18} viewBox="0 0 18 18"><path d="M9 1l7 2c0 7-2 11-7 14C4 14 2 10 2 3z" fill="#3fae3f" stroke="#dfe" /><path d="M10 4l-4 6h3l-1 4 4-6H9z" fill="#fff" /></Svg>
          </TrayCell>
          <Clock>19:52<br />星期日</Clock>
        </Tray>
        <Mark>三维网<MarkUrl>www.3dportal.cn</MarkUrl></Mark>
      </Taskbar>
    </Shell>
  );
}
